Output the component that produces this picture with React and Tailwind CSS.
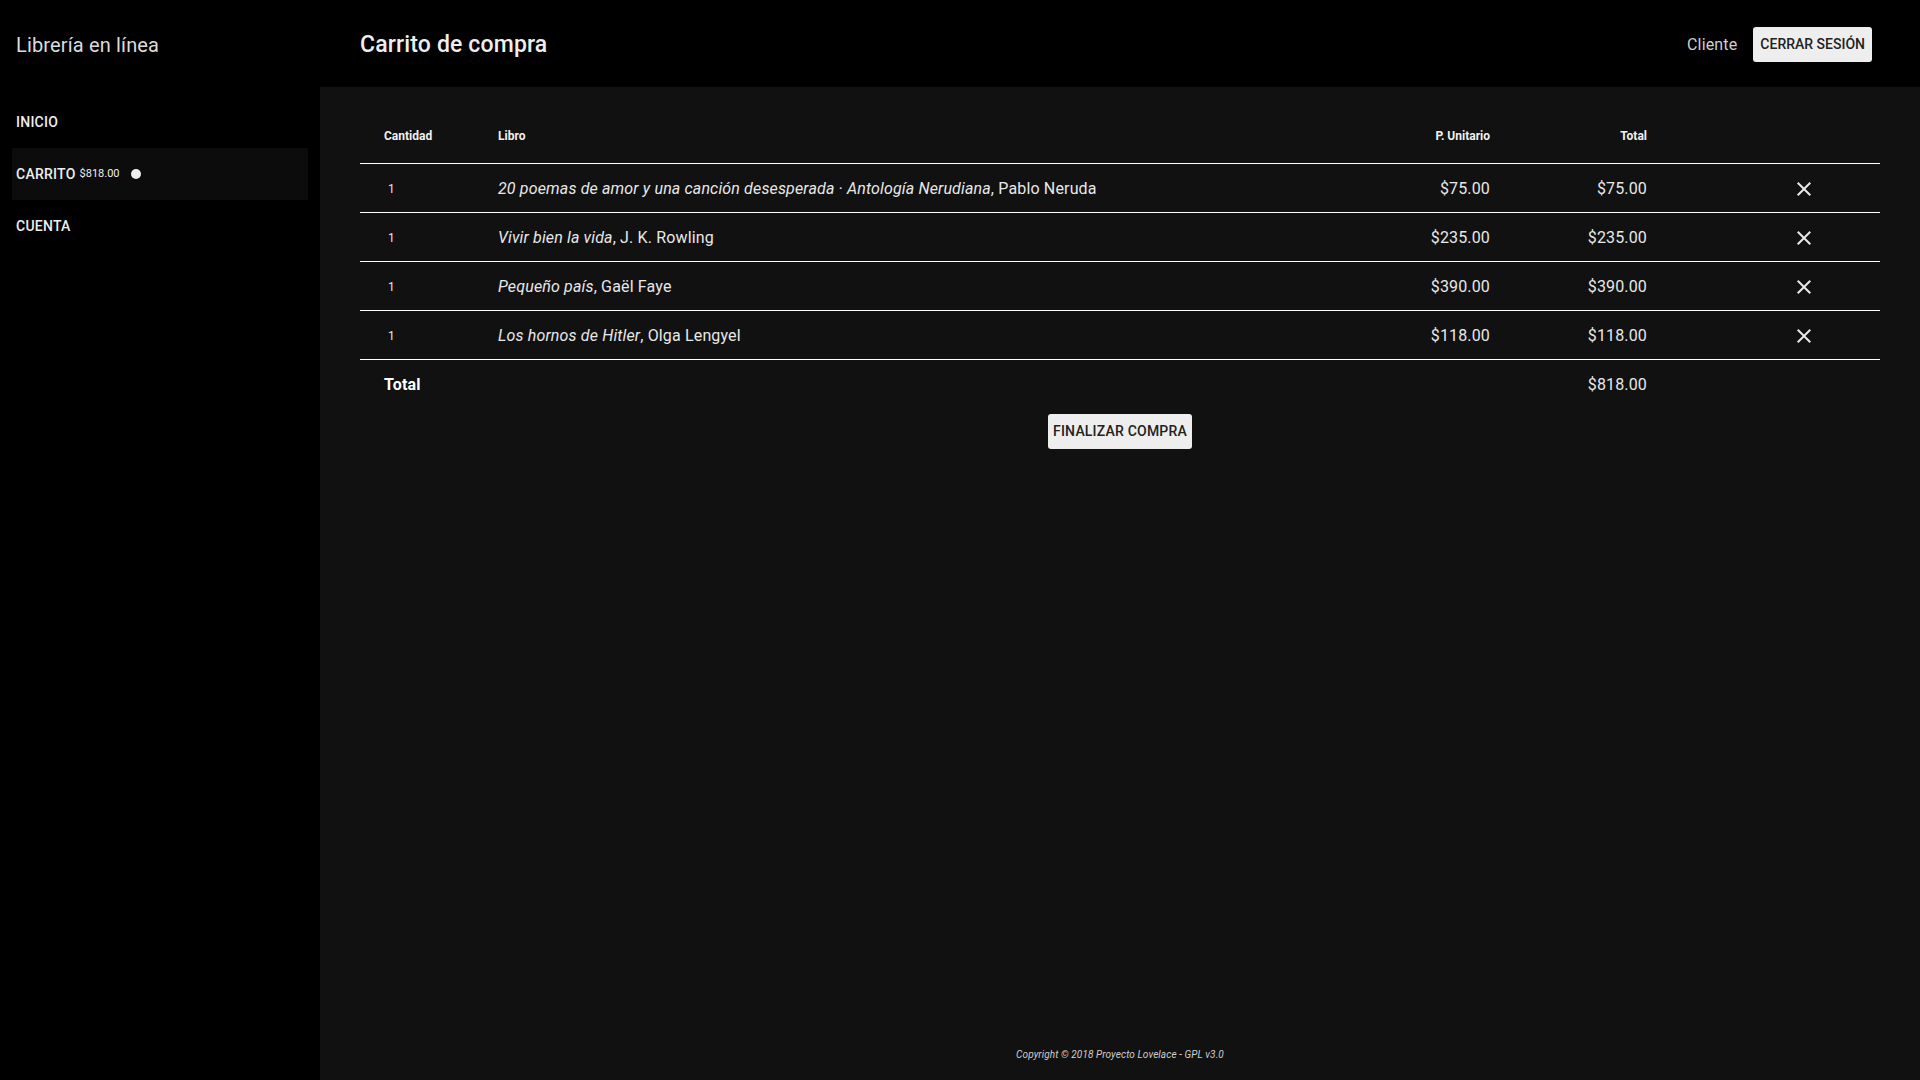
import React from "react";

const rows = [
  { title: "20 poemas de amor y una canción desesperada · Antología Nerudiana", author: "Pablo Neruda", price: "$75.00" },
  { title: "Vivir bien la vida", author: "J. K. Rowling", price: "$235.00" },
  { title: "Pequeño país", author: "Gaël Faye", price: "$390.00" },
  { title: "Los hornos de Hitler", author: "Olga Lengyel", price: "$118.00" },
];

function CloseIcon() {
  return (
    <svg width="24" height="24" viewBox="0 0 24 24" fill="#e8e8e8">
      <path d="M19 6.41L17.59 5 12 10.59 6.41 5 5 6.41 10.59 12 5 17.59 6.41 19 12 13.41 17.59 19 19 17.59 13.41 12z" />
    </svg>
  );
}

export default function App() {
  return (
    <div className="flex h-[1080px] w-[1920px] flex-col bg-black text-[#e8e8e8]" style={{ fontFamily: "Roboto, 'Liberation Sans', sans-serif" }}>
      <header className="flex h-[87px] shrink-0 items-center bg-black pt-[2px]">
        <div className="w-[320px] pl-4 text-[20px] font-normal tracking-[0.15px] text-[#dcdcdc]">Librería en línea</div>
        <div className="flex-1 pl-10 pt-[2px] text-[23px] font-medium tracking-[0.15px] text-[#eeeeee]">Carrito de compra</div>
        <div className="flex items-center gap-4 pr-12">
          <span className="text-[16px] tracking-[0.15px] text-[#cfcfcf]">Cliente</span>
          <button className="h-[35px] rounded-[3px] bg-[#eeeeee] px-[7px] text-[14px] font-medium text-[#222]">CERRAR SESIÓN</button>
        </div>
      </header>
      <div className="flex flex-1">
        <nav className="w-[320px] shrink-0 bg-black px-3 pt-[9px]">
          <div className="flex h-[52px] items-center pl-1 text-[14px] font-medium tracking-[0.25px] text-[#eee]">INICIO</div>
          <div className="flex h-[52px] items-center bg-[#0c0c0c] pl-1 text-[14px] font-medium tracking-[0.25px] text-[#eee]">
            CARRITO
            <span className="ml-1 text-[11px] font-normal tracking-normal">$818.00</span>
            <span className="ml-[11px] h-[10px] w-[10px] rounded-full bg-[#eee]"></span>
          </div>
          <div className="flex h-[52px] items-center pl-1 text-[14px] font-medium tracking-[0.25px] text-[#eee]">CUENTA</div>
        </nav>
        <main className="flex flex-1 flex-col bg-[#111111] px-10 pt-[21px]">
          <div className="flex flex-col">
            <div className="flex h-[56px] items-center border-b border-white text-[12px] font-bold text-[#f0f0f0]">
              <div className="w-[114px] pl-6">Cantidad</div>
              <div className="flex-1 pl-6">Libro</div>
              <div className="w-[180px] pr-6 text-right">P. Unitario</div>
              <div className="w-[157px] pr-6 text-right">Total</div>
              <div className="w-[209px]"></div>
            </div>
            {rows.map((r, i) => (
              <div key={i} className="flex h-[49px] items-center border-b border-white pt-[1px] text-[16px] tracking-[0.15px] text-[#e8e8e8]">
                <div className="w-[114px] pl-[28px] text-[12px]">1</div>
                <div className="flex-1 pl-6">
                  <i>{r.title}</i>, {r.author}
                </div>
                <div className="w-[180px] pr-6 text-right">{r.price}</div>
                <div className="w-[157px] pr-6 text-right">{r.price}</div>
                <div className="flex w-[209px] items-center pl-[121px]">
                  <CloseIcon />
                </div>
              </div>
            ))}
            <div className="flex h-[50px] items-center text-[16px] tracking-[0.15px]">
              <div className="w-[114px] pl-6 font-bold text-white">Total</div>
              <div className="flex-1"></div>
              <div className="w-[180px]"></div>
              <div className="w-[157px] pr-6 text-right text-[#e8e8e8]">$818.00</div>
              <div className="w-[209px]"></div>
            </div>
          </div>
          <div className="mt-1 flex justify-center">
            <button className="h-[35px] rounded-[3px] bg-[#eeeeee] px-[5px] text-[14px] font-medium tracking-[0.2px] text-[#222]">FINALIZAR COMPRA</button>
          </div>
          <div className="flex-1"></div>
          <footer className="pb-[18px] text-center text-[10px] italic tracking-[0.1px] text-[#cfcfcf]">Copyright © 2018 Proyecto Lovelace - GPL v3.0</footer>
        </main>
      </div>
    </div>
  );
}
